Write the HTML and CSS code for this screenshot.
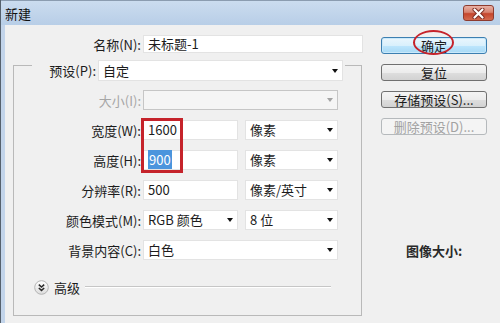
FILE: index.html
```html
<!DOCTYPE html>
<html lang="zh-CN">
<head>
<meta charset="UTF-8">
<meta name="viewport" content="width=device-width, initial-scale=1.0">
<title>新建</title>
<link rel="stylesheet" href="styles.css">
</head>
<body>
<div class="window">
  <div class="titlebar">
    <span class="title">新建</span>
    <div class="close">
      <svg width="13" height="11" viewBox="0 0 13 11">
        <path d="M2.5 1.5 L10.5 9.5 M10.5 1.5 L2.5 9.5" stroke="#7a2a20" stroke-width="4" stroke-linecap="round"/>
        <path d="M2.5 1.5 L10.5 9.5 M10.5 1.5 L2.5 9.5" stroke="#fff" stroke-width="2.2" stroke-linecap="round"/>
      </svg>
    </div>
  </div>

  <div class="body">
    <div class="main">
      <div class="name-row">
        <label class="lbl">名称(N):</label>
        <div class="field name">未标题-1</div>
      </div>

      <fieldset class="group">
        <legend class="preset">
          <div class="preset-inner">
            <label class="preset-lbl">预设(P):</label>
            <div class="field select preset-select">自定</div>
          </div>
        </legend>

        <div class="row disabled">
          <label class="lbl">大小(I):</label>
          <div class="field select wide off"></div>
        </div>
        <div class="row">
          <label class="lbl">宽度(W):</label>
          <div class="field short">1600</div>
          <div class="field select unit">像素</div>
        </div>
        <div class="row">
          <label class="lbl">高度(H):</label>
          <div class="field short"><span class="picked">900</span></div>
          <div class="field select unit">像素</div>
        </div>
        <div class="row">
          <label class="lbl">分辨率(R):</label>
          <div class="field short">500</div>
          <div class="field select unit">像素/英寸</div>
        </div>
        <div class="row">
          <label class="lbl">颜色模式(M):</label>
          <div class="field select short">RGB 颜色</div>
          <div class="field select unit">8 位</div>
        </div>
        <div class="row">
          <label class="lbl">背景内容(C):</label>
          <div class="field select wide">白色</div>
        </div>

        <div class="advanced">
          <svg width="15" height="15" viewBox="0 0 15 15">
            <defs>
              <linearGradient id="knob" x1="0" y1="0" x2="0" y2="1">
                <stop offset="0" stop-color="#ffffff"/>
                <stop offset="1" stop-color="#dcdcdc"/>
              </linearGradient>
            </defs>
            <circle cx="7.5" cy="7.5" r="6.8" fill="url(#knob)" stroke="#b4b4b4"/>
            <polyline points="4.8,4.6 7.5,7 10.2,4.6" fill="none" stroke="#2b2b2b" stroke-width="1.5"/>
            <polyline points="4.8,8 7.5,10.4 10.2,8" fill="none" stroke="#2b2b2b" stroke-width="1.5"/>
          </svg>
          <span class="adv-text">高级</span>
          <span class="rule"></span>
        </div>
      </fieldset>

      <div class="mark-box"></div>
    </div>

    <div class="side">
      <div class="btn default">确定</div>
      <div class="btn">复位</div>
      <div class="btn">存储预设(S)...</div>
      <div class="btn off">删除预设(D)...</div>
      <div class="image-size">图像大小:</div>
      <div class="mark-ring"></div>
    </div>
  </div>
</div>
</body>
</html>
```

FILE: styles.css
```css
body {
  margin: 0;
  background: #f0f0f0;
  font-family: "Noto Sans CJK SC", "Noto Sans", sans-serif;
  font-size: 13px;
  color: #1c1c1c;
}

.window {
  width: 500px;
  height: 323px;
  overflow: hidden;
  box-sizing: border-box;
  border-left: 1px solid #56616d;
  background: #f0f0f0;
}

.titlebar {
  height: 25px;
  box-sizing: border-box;
  border-top: 1px solid #8b9cb0;
  background: linear-gradient(#cbdcef, #b8cee7);
  display: flex;
  align-items: center;
  justify-content: space-between;
  padding: 0 6px 0 4px;
}
.title {
  font-size: 13px;
  line-height: 15px;
  color: #111;
}
.close {
  width: 31px;
  height: 16px;
  box-sizing: border-box;
  border: 1px solid #8d3b2f;
  border-radius: 3px;
  background: linear-gradient(#e8b1a6 0%, #d7826f 45%, #c5452c 55%, #d36a4f 100%);
  display: flex;
  align-items: center;
  justify-content: center;
}

.body {
  display: flex;
  height: 298px;
  border-left: 4px solid #c2d4ea;
}

.main {
  width: 376px;
  position: relative;
  padding-top: 10px;
  box-sizing: border-box;
}

.lbl {
  text-align: right;
  margin-right: 2px;
  line-height: 15px;
  white-space: nowrap;
}

.name-row {
  display: flex;
  align-items: center;
  height: 18px;
}
.name-row .lbl {
  width: 136px;
}

.field {
  position: relative;
  box-sizing: border-box;
  height: 20px;
  padding: 0 4px;
  line-height: 18px;
  background: #fff;
  border: 1px solid #e3e3e3;
  white-space: nowrap;
}
.field.name {
  width: 220px;
  height: 18px;
  line-height: 16px;
}
.select::after {
  content: "";
  position: absolute;
  right: 4px;
  top: 50%;
  margin-top: -2px;
  border-style: solid;
  border-width: 4px 3.5px 0;
  border-color: #111 transparent transparent;
}
.field.off {
  background: #f5f5f5;
  border-color: #c6c6c6;
}
.field.off::after {
  border-top-color: #a3a3a3;
}

.group {
  margin: -3px 0 0 8px;
  width: 349px;
  min-width: 0;
  box-sizing: border-box;
  padding: 9px 0 21px;
  border: 1px solid #b9b9b9;
}
.preset {
  margin-left: 18px;
  padding: 10px 2px 0 16px;
}
.preset-inner {
  display: flex;
  align-items: center;
}
.preset-lbl {
  width: 48px;
  margin-right: 2px;
  text-align: right;
  line-height: 15px;
  white-space: nowrap;
}
.preset-select {
  width: 245px;
  height: 21px;
  line-height: 19px;
}

.row {
  display: flex;
  align-items: center;
  height: 20px;
  margin-bottom: 10px;
}
.row .lbl {
  width: 127px;
}
.row.disabled .lbl {
  color: #a6a6a6;
}
.wide {
  width: 195px;
}
.short {
  width: 95px;
}
.unit {
  width: 93px;
  margin-left: 7px;
}
.picked {
  background: #4b95dd;
  color: #fff;
  padding: 0 1px;
}

.advanced {
  display: flex;
  align-items: center;
  height: 14px;
  margin-top: 20px;
  padding-left: 20px;
}
.adv-text {
  margin-left: 5px;
  line-height: 15px;
}
.rule {
  flex: 1;
  height: 0;
  margin: 0 30px 0 5px;
  border-top: 1px solid #c6c6c6;
  border-bottom: 1px solid #fff;
}

.side {
  position: relative;
  width: 106px;
  padding-top: 12px;
}
.btn {
  height: 17px;
  box-sizing: border-box;
  margin-bottom: 10px;
  border: 1px solid #707070;
  border-radius: 3px;
  background: linear-gradient(#f4f4f4 0%, #ececec 50%, #dedede 51%, #d2d2d2 100%);
  text-align: center;
  line-height: 15px;
  white-space: nowrap;
}
.btn.default {
  border-color: #3c7fb1;
  background: linear-gradient(#eaf6fd 0%, #d9f0fc 50%, #bee6fd 51%, #a7d9f5 100%);
  box-shadow: inset 0 0 0 1px #c9e9fb;
}
.btn.off {
  border-color: #b5b9bc;
  background: #f4f4f4;
  color: #a2a2a2;
}
.image-size {
  margin-top: 108px;
  text-align: center;
  font-weight: bold;
  line-height: 15px;
  color: #2a2a2a;
}

/* red annotations drawn over the dialog */
.mark-box {
  position: absolute;
  left: 136px;
  top: 93px;
  width: 42px;
  height: 55px;
  box-sizing: border-box;
  border: 3px solid #c5232b;
}
.mark-ring {
  position: absolute;
  left: 32px;
  top: 5px;
  width: 41px;
  height: 25px;
  box-sizing: border-box;
  border: 2.5px solid #c5232b;
  border-radius: 50%;
}
```
